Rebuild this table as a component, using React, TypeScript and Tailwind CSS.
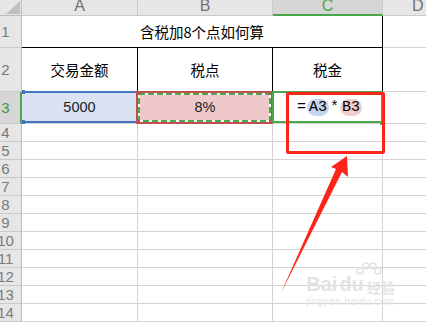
import React from "react";

const FONT = { fontFamily: '"Liberation Sans", "Noto Sans CJK SC", sans-serif' };
const CJK = { fontFamily: '"Noto Sans CJK SC", "Liberation Sans", sans-serif' };
const MONO = { fontFamily: '"Liberation Mono", "DejaVu Sans Mono", monospace' };

function ColHead({ label, active, className = "" }: { label: string; active?: boolean; className?: string }) {
  return (
    <div
      className={`relative overflow-hidden flex items-start border-r border-b border-[#c9c9c9] ${
        active ? "bg-[#d6d6d6] border-b-2 border-b-[#4aa84a] text-[#4aa84a]" : "bg-[#e6e6e6] text-[#737373]"
      } ${className}`}
    >
      <span className="-mt-[2px] text-[16px] leading-[16px]">{label}</span>
    </div>
  );
}

function RowHead({ n, active }: { n: number; active?: boolean }) {
  return (
    <div
      className={`flex items-center overflow-visible border-b border-[#c9c9c9] ${
        active ? "bg-[#d6d6d6] border-r-2 border-r-[#4aa84a] text-[#3c9a3c]" : "bg-[#e6e6e6] border-r border-r-[#bdbdbd] text-[#7a7a7a]"
      }`}
    >
      <div className="w-[11px] flex justify-center">
        <span className="whitespace-nowrap text-[15px] leading-none">{n}</span>
      </div>
    </div>
  );
}

const G = "border-r border-b border-[#d4d4d4]";

export default function App() {
  const rest = [4, 5, 6, 7, 8, 9, 10, 11, 12, 13, 14];
  return (
    <div className="relative w-[426px] h-[322px] overflow-hidden bg-white" style={FONT}>
      <div className="grid grid-cols-[22px_116px_135px_110px_43px] grid-rows-[16px_32px_44px_32px_repeat(11,18px)]">
        {/* header row */}
        <div className="relative bg-[#e6e6e6] border-r border-b border-[#bdbdbd]">
          <svg className="absolute left-0 top-0" width="21" height="15">
            <polygon points="6,14 20,14 20,1" fill="#bfbfbf" />
          </svg>
        </div>
        <ColHead label="A" className="justify-center" />
        <ColHead label="B" className="justify-center" />
        <ColHead label="C" active className="justify-center" />
        <ColHead label="D" className="justify-start pl-[29px] border-r-0" />

        {/* row 1 */}
        <RowHead n={1} />
        <div className="col-span-3 flex items-center justify-center border-r border-b border-black text-[14.5px] text-black" style={CJK}>
          含税加8个点如何算
        </div>
        <div className="border-b border-[#d4d4d4]" />

        {/* row 2 */}
        <RowHead n={2} />
        <div className="flex items-center justify-center border-r border-b border-black text-[14.5px] text-black" style={CJK}>
          交易金额
        </div>
        <div className="flex items-center justify-center border-r border-b border-black text-[14.5px] text-black" style={CJK}>
          税点
        </div>
        <div className="flex items-center justify-center border-r border-b border-black text-[14.5px] text-black" style={CJK}>
          税金
        </div>
        <div className="border-b border-[#d4d4d4]" />

        {/* row 3 */}
        <RowHead n={3} active />
        <div className={`relative flex items-center justify-center bg-[#dae3f3] ${G} text-[14.5px] text-[#222]`}>
          5000
          <div className="absolute -top-px left-0 -right-px bottom-0 border-y-2 border-[#4472c4]" />
          <div className="absolute -top-[2px] left-0 w-[3px] h-[4px] bg-[#4472c4]" />
          <div className="absolute -bottom-[1px] left-0 w-[3px] h-[4px] bg-[#4472c4]" />
        </div>
        <div className={`relative flex items-center justify-center bg-[#efc9c9] ${G} text-[14.5px] text-[#222]`}>
          8%
          <svg className="absolute -top-px -left-[2px]" width="137" height="33">
            <rect x="1" y="1" width="135" height="31" fill="none" stroke="#c0504d" strokeWidth="2" />
            <rect x="3" y="3" width="131" height="27" fill="none" stroke="#ffffff" strokeWidth="2" />
            <rect x="3" y="3" width="131" height="27" fill="none" stroke="#4aa84a" strokeWidth="2" strokeDasharray="6 3" />
            <rect x="0" y="0" width="4" height="4" fill="#c0504d" />
            <rect x="0" y="29" width="4" height="4" fill="#c0504d" />
            <rect x="133" y="0" width="4" height="4" fill="#c0504d" />
            <rect x="133" y="29" width="4" height="4" fill="#c0504d" />
          </svg>
        </div>
        <div className={`relative flex items-center pl-[24px] ${G}`}>
          <div className="absolute -top-px -left-px -right-px bottom-0 border-2 border-[#4aa84a]" />
          <div className="absolute -bottom-[2px] -right-[2px] w-[4px] h-[4px] bg-[#4aa84a]" />
          <div className="relative flex items-center text-[15px] text-black leading-none" style={MONO}>
            <span>=</span>
            <span className="ml-[1px] px-[2px] py-[1px] rounded-full bg-[#c6d4ef]">A3</span>
            <span className="mx-[1px]">*</span>
            <span className="px-[2px] py-[1px] rounded-full bg-[#f2cdcd]">B3</span>
          </div>
        </div>
        <div className="border-b border-[#d4d4d4]" />

        {rest.map((n) => (
          <React.Fragment key={n}>
            <RowHead n={n} />
            <div className={G} />
            <div className={G} />
            <div className={G} />
            <div className="border-b border-[#d4d4d4]" />
          </React.Fragment>
        ))}
      </div>

      {/* annotation box */}
      <div className="absolute left-[286px] top-[92px] w-[99px] h-[62px] border-[3px] border-[#ff2418] rounded-[2px]" />

      {/* arrow */}
      <svg className="absolute left-0 top-0 pointer-events-none" width="426" height="322">
        <polygon points="347,156 348,177 342,172 281,293 336,169 331,167" fill="#ff2418" />
      </svg>

      {/* watermark */}
      <div className="absolute left-[306px] top-[262px] flex flex-col items-center text-[#e3e3e3]">
        <svg width="30" height="18" className="ml-[34px]">
          <circle cx="7" cy="9" r="3" fill="none" stroke="#e3e3e3" strokeWidth="1.5" />
          <circle cx="13" cy="4" r="3" fill="none" stroke="#e3e3e3" strokeWidth="1.5" />
          <circle cx="20" cy="4" r="3" fill="none" stroke="#e3e3e3" strokeWidth="1.5" />
          <circle cx="25" cy="9" r="3" fill="none" stroke="#e3e3e3" strokeWidth="1.5" />
        </svg>
        <div className="flex items-end -mt-[6px] leading-none">
          <span className="text-[20px] font-bold">Bai</span>
          <span className="text-[20px] font-bold ml-[2px]">du</span>
          <span className="text-[14px] font-bold ml-[3px]" style={CJK}>经验</span>
        </div>
        <span className="text-[10px] leading-none mt-[3px] tracking-[0.5px]">jingyan.baidu.com</span>
      </div>
    </div>
  );
}
